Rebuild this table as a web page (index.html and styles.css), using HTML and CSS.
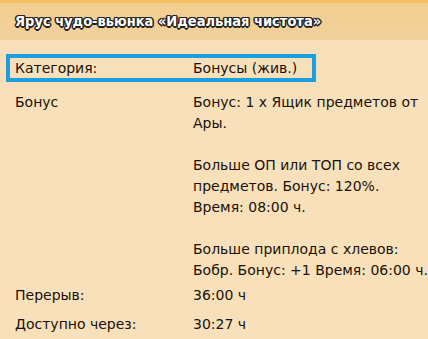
FILE: index.html
```html
<!DOCTYPE html>
<html lang="ru">
<head>
<meta charset="utf-8">
<link rel="stylesheet" href="styles.css">
</head>
<body>
<div class="panel">
  <div class="header"><span class="title">Ярус чудо-вьюнка «Идеальная чистота»</span></div>
  <div class="content">
    <div class="row highlight">
      <div class="label">Категория:</div>
      <div class="value">Бонусы (жив.)</div>
    </div>
    <div class="row bonus">
      <div class="label">Бонус</div>
      <div class="value">
        <p>Бонус: 1 х Ящик предметов от<br>Ары.</p>
        <p>Больше ОП или ТОП со всех<br>предметов. Бонус: 120%.<br>Время: 08:00 ч.</p>
        <p>Больше приплода с хлевов:<br>Бобр. Бонус: +1 Время: 06:00 ч.</p>
      </div>
    </div>
    <div class="row">
      <div class="label">Перерыв:</div>
      <div class="value">36:00 ч</div>
    </div>
    <div class="row">
      <div class="label">Доступно через:</div>
      <div class="value">30:27 ч</div>
    </div>
  </div>
</div>
</body>
</html>
```
FILE: styles.css
```css
html, body {
  margin: 0;
  padding: 0;
  background: #f8e0ba;
}
.panel {
  width: 428px;
  height: 339px;
  overflow: hidden;
  font-family: "DejaVu Sans", sans-serif;
  font-size: 14px;
  color: #1a1208;
}
.header {
  height: 40px;
  box-sizing: border-box;
  border-top: 3px solid #f3c063;
  background: linear-gradient(#f2cd8f, #f1d29c);
  display: flex;
  align-items: center;
  padding-left: 15px;
}
.title {
  color: #fff;
  font-family: "DejaVu Sans Condensed", "DejaVu Sans", sans-serif;
  font-stretch: condensed;
  font-weight: bold;
  font-size: 14.5px;
  text-shadow: -1px -1px 0 #222, 1px -1px 0 #222, -1px 1px 0 #222, 1px 1px 0 #222, 0 1.5px 0 #222, 0 -1.5px 0 #222, 1.5px 0 0 #222, -1.5px 0 0 #222;
  margin-top: -2px;
}
.content {
  padding: 14px 0 0 6px;
}
.row {
  display: grid;
  grid-template-columns: 178px 1fr;
  line-height: 21px;
  padding: 4px 0 4px 9px;
}
.value {
  white-space: nowrap;
}
.row.highlight {
  width: 310px;
  box-sizing: border-box;
  border: 4px solid #1aa0e0;
  padding: 0 0 0 5px;
  line-height: 20px;
  margin-bottom: 6px;
}
.value p {
  margin: 0 0 21px 0;
}
.value p:last-child {
  margin-bottom: 0;
}
.row.bonus {
  padding-bottom: 0;
}
```
